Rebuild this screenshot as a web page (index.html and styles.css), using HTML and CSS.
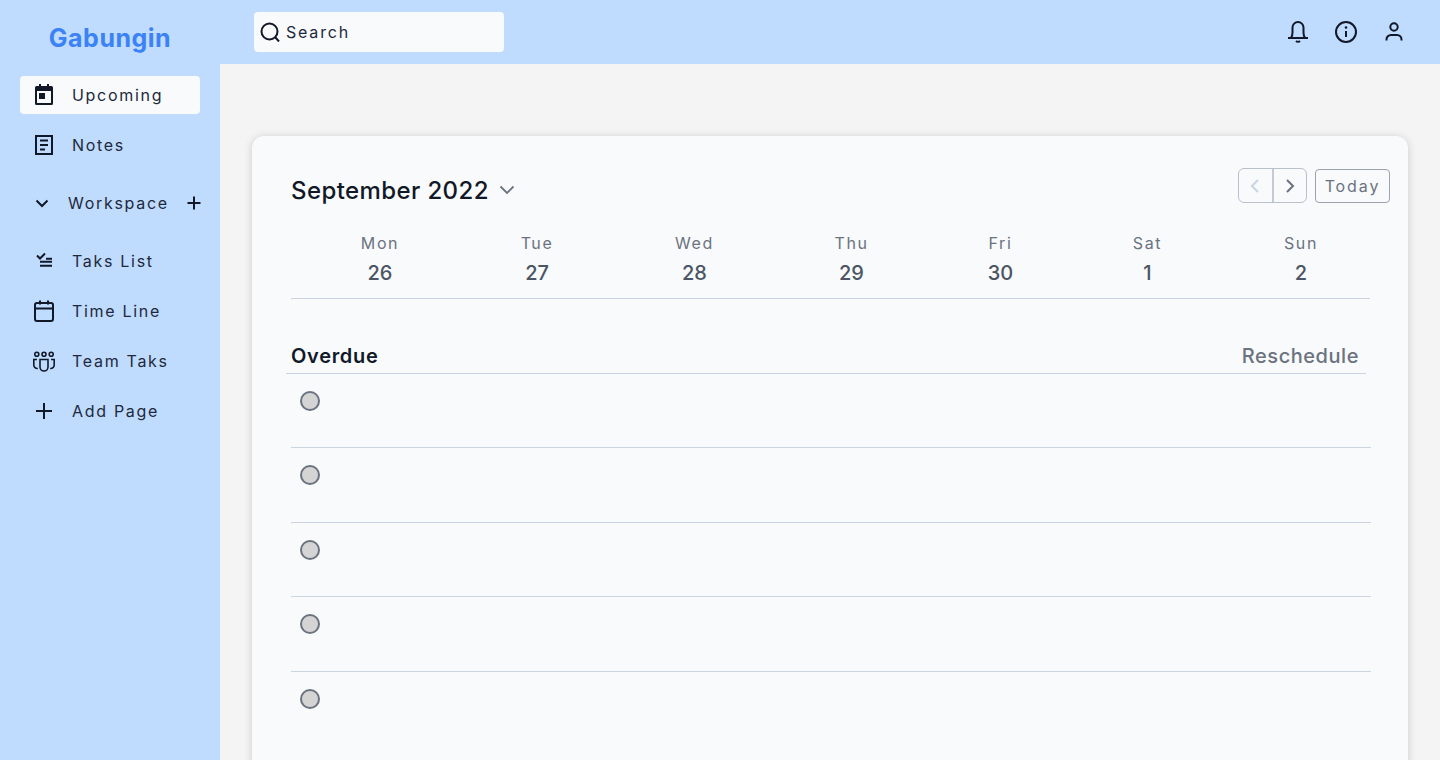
FILE: index.html
```html
<!DOCTYPE html>
<html lang="en">
<head>
<meta charset="utf-8">
<title>Gabungin</title>
<link rel="stylesheet" href="styles.css">
</head>
<body>
<aside class="sidebar">
  <div class="logo">Gabungin</div>
  <nav class="nav">
    <a class="nav-item active">
      <svg class="icon" viewBox="0 0 24 24"><path class="solid" d="M7 1h2v2h6V1h2v2h2.500A1.500 1.500 0 0 1 21 4.500V20.500A1.500 1.500 0 0 1 19.500 22H4.500A1.500 1.500 0 0 1 3 20.500V4.500A1.500 1.500 0 0 1 4.500 3H7zM5 8v12h14V8z"/><rect class="solid" x="7" y="10" width="6" height="6"/></svg>
      <span>Upcoming</span>
    </a>
    <a class="nav-item">
      <svg class="icon" viewBox="0 0 24 24"><rect class="line" x="4" y="3" width="16" height="18"/><path class="line" d="M8 7.500h8M8 12h8M8 16.500h5"/></svg>
      <span>Notes</span>
    </a>
    <div class="nav-item section">
      <svg class="chev" viewBox="0 0 16 16"><path class="line" d="M2.500 5.500 8 11l5.500-5.500"/></svg>
      <span class="section-label">Workspace</span>
      <svg class="plus" viewBox="0 0 16 16"><path class="line" d="M8 1.500v13M1.500 8h13"/></svg>
    </div>
    <a class="nav-item">
      <svg class="icon" viewBox="0 0 24 24"><path class="line" d="M5 6.500 8 9.500 13 4.500M14 9.700h6M8 12.800h12M8 16.700h12"/></svg>
      <span>Taks List</span>
    </a>
    <a class="nav-item">
      <svg class="icon" viewBox="0 0 24 24"><rect class="line" x="3" y="4" width="18" height="18" rx="2"/><path class="line" d="M3 9.500h18M8 1.500v4M16 1.500v4"/></svg>
      <span>Time Line</span>
    </a>
    <a class="nav-item">
      <svg class="icon" viewBox="0 0 24 24"><g class="line thin"><circle cx="4.800" cy="5.300" r="2"/><circle cx="12" cy="5.300" r="2"/><circle cx="19.200" cy="5.300" r="2"/><path d="M8 10.500h8V18a4 4 0 0 1-8 0z"/><path d="M5 10.500H1.800V16a3.500 3.500 0 0 0 4 3.500M19 10.500h3.200V16a3.500 3.500 0 0 1-4 3.500"/></g></svg>
      <span>Team Taks</span>
    </a>
    <a class="nav-item">
      <svg class="icon" viewBox="0 0 24 24"><path class="line" d="M12 4v16M4 12h16"/></svg>
      <span>Add Page</span>
    </a>
  </nav>
</aside>
<div class="main">
  <header class="topbar">
    <label class="search">
      <svg class="search-icon" viewBox="0 0 20 20"><circle class="line" cx="9.500" cy="9.500" r="8"/><path class="line" d="m15 15 4 4.500"/></svg>
      <span>Search</span>
    </label>
    <div class="top-actions">
      <svg class="icon" viewBox="0 0 24 24"><path class="line" d="M2 18h20M5 18c1-1.500 1.500-3 1.500-5.500v-5a5.500 5.500 0 0 1 11 0v5c0 2.500.5 4 1.500 5.500M10 21c1 1 3 1 4 0"/></svg>
      <svg class="icon" viewBox="0 0 24 24"><circle class="line" cx="12" cy="12" r="10"/><path class="line" d="M12 11v6"/><circle class="solid" cx="12" cy="7.500" r="1.300"/></svg>
      <svg class="icon" viewBox="0 0 24 24"><circle class="line" cx="12" cy="7" r="3.700"/><path class="line" d="M4.500 20.500v-1A4.500 4.500 0 0 1 9 15h6a4.500 4.500 0 0 1 4.500 4.500v1"/></svg>
    </div>
  </header>
  <div class="content">
    <section class="card">
      <div class="card-head">
        <div class="month">
          <h1>September 2022</h1>
          <svg class="month-chev" viewBox="0 0 16 16"><path d="M1.500 4.500 8 11l6.500-6.500"/></svg>
        </div>
        <div class="controls">
          <div class="pager">
            <span class="page-btn"><svg viewBox="0 0 12 16"><path class="off" d="M9 2 3 8l6 6"/></svg></span>
            <span class="page-btn"><svg viewBox="0 0 12 16"><path class="on" d="m3 2 6 6-6 6"/></svg></span>
          </div>
          <button class="today">Today</button>
        </div>
      </div>
      <div class="week">
        <div class="day"><span>Mon</span><b>26</b></div>
        <div class="day"><span>Tue</span><b>27</b></div>
        <div class="day"><span>Wed</span><b>28</b></div>
        <div class="day"><span>Thu</span><b>29</b></div>
        <div class="day"><span>Fri</span><b>30</b></div>
        <div class="day"><span>Sat</span><b>1</b></div>
        <div class="day"><span>Sun</span><b>2</b></div>
      </div>
      <div class="overdue">
        <h2>Overdue</h2>
        <span>Reschedule</span>
      </div>
      <ul class="tasks">
        <li><i class="radio"></i></li>
        <li><i class="radio"></i></li>
        <li><i class="radio"></i></li>
        <li><i class="radio"></i></li>
        <li><i class="radio"></i></li>
      </ul>
    </section>
  </div>
</div>
</body>
</html>
```
FILE: styles.css
```css
* { box-sizing: border-box; }
html, body { margin: 0; height: 760px; overflow: hidden; }
body {
  display: flex;
  font-family: Inter, "Liberation Sans", sans-serif;
  color: #1e293b;
  background: #f4f4f4;
}
svg { display: block; flex: none; }
.line { fill: none; stroke: #111827; stroke-width: 2; }
.line.thin { stroke-width: 1.600; }
.solid { fill: #111827; }
.icon { width: 24px; height: 24px; }

.sidebar { width: 220px; flex: none; height: 760px; background: #bfdbfe; padding: 0 20px; }
.logo {
  height: 76px; display: flex; align-items: center; justify-content: center;
  font-size: 25px; font-weight: 700; color: #3b82f6; letter-spacing: 0.500px;
}
.nav { display: flex; flex-direction: column; gap: 12px; }
.nav-item {
  height: 38px; display: flex; align-items: center; gap: 16px;
  padding-left: 12px; border-radius: 4px;
  font-size: 16px; letter-spacing: 1.700px; color: #1e293b;
}
.nav-item.active { background: #f8fafc; }
.section { margin: 8px 0; padding-left: 14px; gap: 0; }
.chev { width: 16px; height: 16px; }
.section-label { margin-left: 18px; }
.plus { width: 16px; height: 16px; margin-left: auto; margin-right: -2px; }

.main { flex: 1; min-width: 0; height: 760px; display: flex; flex-direction: column; }
.topbar {
  height: 64px; flex: none; background: #bfdbfe;
  display: flex; align-items: center; justify-content: space-between;
  padding: 0 34px;
}
.search {
  width: 250px; height: 40px; background: #f8fafc; border-radius: 4px;
  display: flex; align-items: center; gap: 6px; padding-left: 6px;
  font-size: 16px; letter-spacing: 1.800px;
}
.search-icon { width: 20px; height: 20px; }
.top-actions { display: flex; gap: 24px; }

.content { flex: 1; padding: 72px 32px 0; min-height: 0; overflow: hidden; }
.card {
  height: 700px; background: #f8fafc; border-radius: 12px;
  box-shadow: 0 1px 8px rgba(0, 0, 0, 0.170);
  padding: 32px 0 0 39px;
}
.card-head { display: flex; justify-content: space-between; height: 44px; }
.month { display: flex; align-items: center; gap: 10px; height: 44px; }
.month h1 { margin: 0; font-size: 24px; font-weight: 500; color: #111827; letter-spacing: 0.400px; }
.month-chev { width: 16px; height: 16px; }
.month-chev path { fill: none; stroke: #6b7280; stroke-width: 1.800; }
.controls { display: flex; gap: 8px; margin-right: 18px; align-items: flex-start; }
.pager {
  display: flex; width: 69px; height: 35px;
  border: 1px solid #b8c0cc; border-radius: 6px;
}
.page-btn { flex: 1; display: flex; align-items: center; justify-content: center; }
.page-btn + .page-btn { border-left: 2px solid #c4cad4; }
.page-btn svg { width: 12px; height: 16px; }
.off, .on { fill: none; stroke-width: 2; }
.off { stroke: #cbd5e1; }
.on { stroke: #6b7280; }
.today {
  width: 75px; height: 34px; margin: 1px 0 0; padding: 0;
  background: transparent; border: 1px solid #9ca3af; border-radius: 4px;
  font: 400 16px Inter, "Liberation Sans", sans-serif; letter-spacing: 1.900px; color: #6b7280;
}

.week {
  width: 1079px; height: 71px;
  display: grid; grid-template-columns: 178px 136px 179px 135px 163px 131px 176px;
  border-bottom: 1px solid #cbd5e1;
  margin-top: 16px;
}
.day { display: flex; flex-direction: column; align-items: center; padding-top: 3px; }
.day span { font-size: 16px; line-height: 24px; letter-spacing: 1.600px; color: #6b7280; }
.day b { font-size: 20px; line-height: 32px; font-weight: 500; color: #4b5563; margin-top: 2px; }

.overdue {
  width: 1080px; height: 75px; margin-left: -5px;
  display: flex; align-items: flex-end; justify-content: space-between;
  padding: 0 7px 3px 5px; border-bottom: 1px solid #cbd5e1;
}
.overdue h2 { margin: 0; font-size: 20px; line-height: 28px; font-weight: 600; color: #111827; letter-spacing: 0.700px; }
.overdue span { font-size: 20px; line-height: 28px; font-weight: 500; color: #6b7280; letter-spacing: 0.550px; }

.tasks { list-style: none; margin: -0.250px 0 0; padding: 0; width: 1080px; }
.tasks li { height: 74.500px; padding: 17px 0 0 9px; border-bottom: 1px solid #cbd5e1; }
.tasks li:last-child { border-bottom: 0; }
.radio {
  display: block; width: 20px; height: 20px; border-radius: 50%;
  background: #d4d4d4; border: 2px solid #6b7280;
}
```
